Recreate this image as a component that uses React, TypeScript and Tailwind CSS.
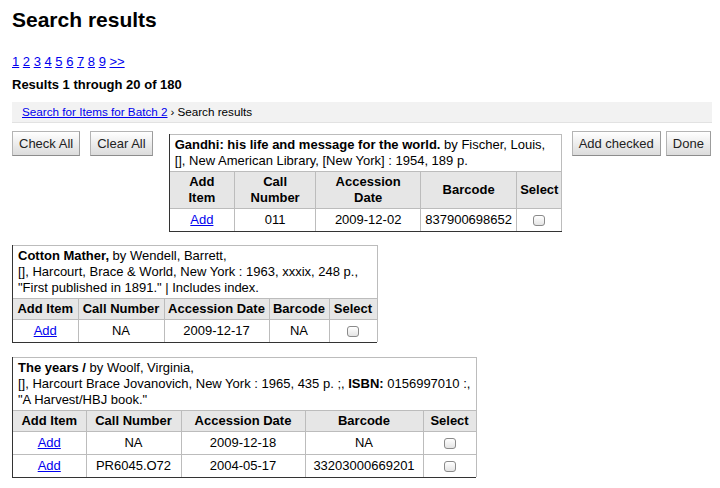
import React from "react";

type Row = React.ReactNode[];

function Checkbox() {
  return (
    <span className="inline-block align-middle w-[12px] h-[11px] rounded-[3px] border border-[#8a8a8a] bg-gradient-to-b from-white to-[#e4e4e4]" />
  );
}

function AddLink() {
  return <a className="text-[#0000ee] underline cursor-pointer">Add</a>;
}

function ItemTable({
  caption,
  headers,
  widths,
  rows,
  tableW,
}: {
  caption: React.ReactNode;
  headers: React.ReactNode[];
  widths: string[];
  rows: Row[];
  tableW: string;
}) {
  return (
    <div className={"border-l border-b border-[#333] " + tableW}>
      <table className="w-full table-fixed border-collapse border-t border-r border-[#bcbcbc]">
        <colgroup>
          {widths.map((w, i) => (
            <col key={i} className={w} />
          ))}
        </colgroup>
        <tbody>
          <tr>
            <td
              colSpan={5}
              className="border-b border-[#bcbcbc] px-[5px] py-[2px] leading-[16px] text-left"
            >
              {caption}
            </td>
          </tr>
          <tr>
            {headers.map((h, i) => (
              <th
                key={i}
                className={
                  (i === 0 ? "" : "border-l ") +
                  "border-b border-[#bcbcbc] bg-[#e6e6e6] px-[3px] py-[2px] leading-[16px] font-bold text-center"
                }
              >
                {h}
              </th>
            ))}
          </tr>
          {rows.map((r, ri) => (
            <tr key={ri}>
              {r.map((c, i) => (
                <td
                  key={i}
                  className={
                    (i === 0 ? "" : "border-l ") +
                    (ri === rows.length - 1 ? "" : "border-b ") +
                    "border-[#bcbcbc] px-[3px] py-[3px] leading-[16px] text-center"
                  }
                >
                  {c}
                </td>
              ))}
            </tr>
          ))}
        </tbody>
      </table>
    </div>
  );
}

function Btn({ children }: { children: React.ReactNode }) {
  return (
    <button className="h-[25px] px-[6px] border border-[#b4b4b4] border-b-[#8c8c8c] border-r-[#9c9c9c] bg-gradient-to-b from-white to-[#dcdcdc] text-[13px] leading-[16px] text-[#222]">
      {children}
    </button>
  );
}

export default function App() {
  return (
    <div className="w-[720px] h-[488px] bg-white pl-3 pr-2 font-['Liberation_Sans',Arial,sans-serif] text-[13px] text-black overflow-hidden">
      <h1 className="pt-[8px] text-[21px] leading-[24px] font-bold">Search results</h1>
      <div className="mt-[22px] leading-[16px] flex gap-[3.6px]">
        {["1", "2", "3", "4", "5", "6", "7", "8", "9", ">>"].map((p) => (
          <a key={p} className="text-[#0000ee] underline">
            {p}
          </a>
        ))}
      </div>
      <p className="mt-[7px] leading-[16px] font-bold">Results 1 through 20 of 180</p>
      <div className="mt-[9px] h-[21px] bg-[#f2f2f2] border-b border-[#e2e2e2] pl-[10px] flex items-center text-[11.7px]">
        <a className="text-[#0000ee] underline">Search for Items for Batch 2</a>
        <span className="ml-[3px]">›</span>
        <span className="ml-[3px]">Search results</span>
      </div>
      <div className="mt-[8px] flex items-start">
        <Btn>Check All</Btn>
        <div className="ml-[10px]">
          <Btn>Clear All</Btn>
        </div>
        <div className="ml-[16px] mt-[3px]">
          <ItemTable
            tableW="w-[393px]"
            widths={["w-[65px]", "w-[81px]", "w-[105px]", "w-[96px]", "w-[45px]"]}
            caption={
              <>
                <b>Gandhi: his life and message for the world.</b> by Fischer, Louis,
                <br />
                [], New American Library, [New York] : 1954, 189 p.
              </>
            }
            headers={[
              <>Add<br />Item</>,
              <>Call<br />Number</>,
              <>Accession<br />Date</>,
              "Barcode",
              "Select",
            ]}
            rows={[[<AddLink />, "011", "2009-12-02", "837900698652", <Checkbox />]]}
          />
        </div>
        <div className="ml-[10px]">
          <Btn>Add checked</Btn>
        </div>
        <div className="ml-[5px]">
          <Btn>Done</Btn>
        </div>
      </div>
      <div className="mt-[13px]">
        <ItemTable
          tableW="w-[365px]"
          widths={["w-[65px]", "w-[86px]", "w-[105px]", "w-[60px]", "w-[48px]"]}
          caption={
            <>
              <b>Cotton Mather,</b> by Wendell, Barrett,
              <br />
              [], Harcourt, Brace &amp; World, New York : 1963, xxxix, 248 p.,
              <br />
              "First published in 1891." | Includes index.
            </>
          }
          headers={["Add Item", "Call Number", "Accession Date", "Barcode", "Select"]}
          rows={[[<AddLink />, "NA", "2009-12-17", "NA", <Checkbox />]]}
        />
      </div>
      <div className="mt-[14px]">
        <ItemTable
          tableW="w-[464px]"
          widths={["w-[73px]", "w-[95px]", "w-[124px]", "w-[118px]", "w-[53px]"]}
          caption={
            <>
              <b>The years /</b> by Woolf, Virginia,
              <br />
              [], Harcourt Brace Jovanovich, New York : 1965, 435 p. ;, <b>ISBN:</b> 0156997010 :,
              <br />
              "A Harvest/HBJ book."
            </>
          }
          headers={["Add Item", "Call Number", "Accession Date", "Barcode", "Select"]}
          rows={[
            [<AddLink />, "NA", "2009-12-18", "NA", <Checkbox />],
            [<AddLink />, "PR6045.O72", "2004-05-17", "33203000669201", <Checkbox />],
          ]}
        />
      </div>
    </div>
  );
}
